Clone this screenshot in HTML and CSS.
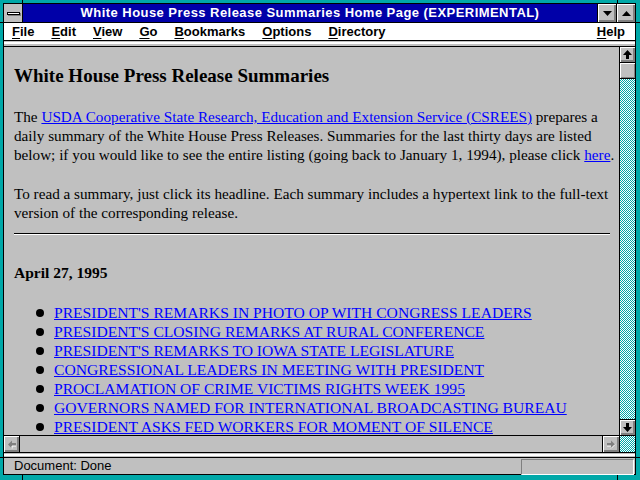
FILE: index.html
```html
<!DOCTYPE html>
<html>
<head>
<meta charset="utf-8">
<title>White House Press Release Summaries Home Page (EXPERIMENTAL)</title>
<link rel="stylesheet" href="styles.css">
</head>
<body>
<div class="screen">
  <span class="mark mark-t1"></span><span class="mark mark-t2"></span>
  <span class="mark mark-b1"></span><span class="mark mark-b2"></span>
  <span class="mark mark-l1"></span><span class="mark mark-l2"></span>
  <span class="mark mark-r1"></span><span class="mark mark-r2"></span>
  <div class="frame">
    <div class="titlebar">
      <div class="sysbtn"><span class="sysbar"></span></div>
      <div class="title">White House Press Release Summaries Home Page (EXPERIMENTAL)</div>
      <div class="tbtn"><svg width="9" height="5" viewBox="0 0 9 5"><path d="M0 0h9L4.5 5z" fill="#000"/></svg></div>
      <div class="tbtn"><svg width="9" height="5" viewBox="0 0 9 5"><path d="M0 5h9L4.5 0z" fill="#000"/></svg></div>
    </div>
    <div class="menubar">
      <span class="mi"><u>F</u>ile</span>
      <span class="mi"><u>E</u>dit</span>
      <span class="mi"><u>V</u>iew</span>
      <span class="mi"><u>G</u>o</span>
      <span class="mi"><u>B</u>ookmarks</span>
      <span class="mi"><u>O</u>ptions</span>
      <span class="mi"><u>D</u>irectory</span>
      <span class="mi mi-help"><u>H</u>elp</span>
    </div>
    <div class="strip"></div>
    <div class="main">
      <div class="viewport">
        <div class="content">
          <h1 class="heading">White House Press Release Summaries</h1>
          <p class="para">The <a href="#">USDA Cooperative State Research, Education and Extension Service (CSREES)</a> prepares a daily summary of the White House Press Releases. Summaries for the last thirty days are listed below; if you would like to see the entire listing (going back to January 1, 1994), please click <a href="#">here</a>.</p>
          <p class="para">To read a summary, just click its headline. Each summary includes a hypertext link to the full-text version of the corresponding release.</p>
          <hr class="rule">
          <h3 class="date">April 27, 1995</h3>
          <ul class="items">
            <li><a href="#">PRESIDENT'S REMARKS IN PHOTO OP WITH CONGRESS LEADERS</a></li>
            <li><a href="#">PRESIDENT'S CLOSING REMARKS AT RURAL CONFERENCE</a></li>
            <li><a href="#">PRESIDENT'S REMARKS TO IOWA STATE LEGISLATURE</a></li>
            <li><a href="#">CONGRESSIONAL LEADERS IN MEETING WITH PRESIDENT</a></li>
            <li><a href="#">PROCLAMATION OF CRIME VICTIMS RIGHTS WEEK 1995</a></li>
            <li><a href="#">GOVERNORS NAMED FOR INTERNATIONAL BROADCASTING BUREAU</a></li>
            <li><a href="#">PRESIDENT ASKS FED WORKERS FOR MOMENT OF SILENCE</a></li>
          </ul>
        </div>
        <div class="vscroll">
          <div class="sbtn"><svg width="9" height="9" viewBox="0 0 9 9"><path d="M4.5 0L9 5H6v4H3V5H0z" fill="#000"/></svg></div>
          <div class="thumb"></div>
          <div class="track"></div>
          <div class="sbtn"><svg width="9" height="9" viewBox="0 0 9 9"><path d="M3 0h3v4h3L4.5 9 0 4h3z" fill="#000"/></svg></div>
        </div>
      </div>
      <div class="hscroll">
        <div class="sbtn sbtn-h sbtn-left"><svg width="10" height="9" viewBox="0 0 10 9"><path d="M1 4.5L5 0.5V3h4v3H5v2.5z" fill="#808080"/><path d="M5 8.5V6h4" fill="none" stroke="#fff" stroke-width="1"/></svg></div>
        <div class="htrack"></div>
        <div class="sbtn sbtn-h sbtn-right"><svg width="10" height="9" viewBox="0 0 10 9"><path d="M9 4.5L5 0.5V3H1v3h4v2.5z" fill="#808080"/><path d="M5 8.5L9 4.5M1 6h4" fill="none" stroke="#fff" stroke-width="1"/></svg></div>
        <div class="corner"></div>
      </div>
    </div>
    <div class="strip strip-low"></div>
    <div class="status">
      <span class="status-text">Document: Done</span>
      <span class="status-box"></span>
    </div>
  </div>
</div>
</body>
</html>
```

FILE: styles.css
```css
* { box-sizing: border-box; }
html, body { margin: 0; padding: 0; }
body { width: 640px; height: 480px; overflow: hidden; background: #00a8a8; }

.screen {
  position: relative;
  width: 640px;
  height: 480px;
  padding: 3px 4px 5px 3px;
  background: #00a8a8;
}
.mark { position: absolute; background: #000; }
.mark-t1 { left: 22px; top: 0; width: 1px; height: 3px; }
.mark-t2 { left: 617px; top: 0; width: 1px; height: 3px; }
.mark-b1 { left: 22px; bottom: 0; width: 1px; height: 5px; }
.mark-b2 { left: 617px; bottom: 0; width: 1px; height: 5px; }
.mark-l1 { left: 0; top: 22px; width: 3px; height: 1px; }
.mark-l2 { left: 0; top: 457px; width: 3px; height: 1px; }
.mark-r1 { right: 0; top: 22px; width: 4px; height: 1px; }
.mark-r2 { right: 0; top: 457px; width: 4px; height: 1px; }

.frame {
  height: 100%;
  border: 1px solid #000;
  display: flex;
  flex-direction: column;
  background: #c0c0c0;
}

/* title bar */
.titlebar {
  flex: none;
  height: 19px;
  display: flex;
  border-bottom: 1px solid #000;
}
.sysbtn {
  width: 19px;
  background: #c0c0c0;
  border-right: 1px solid #000;
  display: flex;
  align-items: center;
  justify-content: center;
}
.sysbar {
  display: block;
  width: 13px;
  height: 3px;
  background: #fff;
  border: 1px solid #000;
  box-shadow: 1px 1px 0 #808080;
}
.title {
  flex: 1;
  background: #0000a8;
  color: #fff;
  font: bold 13px/18px "Liberation Sans", Arial, sans-serif;
  text-align: center;
  white-space: nowrap;
  letter-spacing: 0.45px;
}
.tbtn {
  width: 19px;
  border-left: 1px solid #000;
  background: #c0c0c0;
  box-shadow: inset 1px 1px 0 #fff, inset -1px -1px 0 #808080, inset -2px -2px 0 #808080;
  display: flex;
  align-items: center;
  justify-content: center;
}

/* menu bar */
.menubar {
  flex: none;
  height: 18px;
  background: #fff;
  border-bottom: 1px solid #000;
  display: flex;
  align-items: center;
  padding-left: 4px;
  font: bold 13px/16px "Liberation Sans", Arial, sans-serif;
  color: #000;
}
.mi { padding: 0 8px 0 4px; margin-right: 5px; }
.mi u { text-decoration-thickness: 1px; text-underline-offset: 2px; }
.mi-help { margin-left: auto; margin-right: 2px; }

.strip {
  flex: none;
  height: 6px;
  border-bottom: 1px solid #000;
  background: linear-gradient(#c0c0c0 0 1px, #fff 1px 3px, #c0c0c0 3px);
}
.strip-low { height: 5px; }

/* main */
.main {
  flex: 1;
  min-height: 0;
  display: flex;
  flex-direction: column;
}
.viewport {
  flex: 1;
  min-height: 0;
  display: flex;
}
.content {
  flex: 1;
  overflow: hidden;
  padding: 16px 0 0 10px;
  font: 15.2px/19px "Liberation Serif", "Times New Roman", serif;
  color: #000;
}
.content a { color: #0000ff; text-decoration: underline; }
.heading {
  margin: 0 0 19px;
  font: bold 19px/25px "Liberation Serif", "Times New Roman", serif;
}
.para { margin: 0 0 20px; }
.para:last-of-type { margin-bottom: 0; }
.rule {
  margin: 11px 9px 0 0;
  border: 0;
  height: 2px;
  background: linear-gradient(#000 0 1px, #fff 1px);
}
.date {
  margin: 28px 0 0;
  font: bold 15.5px/19px "Liberation Serif", "Times New Roman", serif;
}
.items {
  list-style: none;
  margin: 21px 0 0;
  padding: 0 0 0 40px;
  font-size: 15.6px;
}
.items li { white-space: nowrap; }
.items li::before {
  content: "";
  display: inline-block;
  width: 8px;
  height: 8px;
  border-radius: 50%;
  background: #000;
  margin-left: -18px;
  margin-right: 10px;
  vertical-align: 1px;
}

/* scrollbars */
.vscroll {
  flex: none;
  width: 16px;
  border-left: 1px solid #000;
  display: flex;
  flex-direction: column;
}
.sbtn {
  flex: none;
  height: 16px;
  background: #c0c0c0;
  box-shadow: inset 1px 1px 0 #fff, inset -1px -1px 0 #808080, inset -2px -2px 0 #808080;
  display: flex;
  align-items: center;
  justify-content: center;
  border-bottom: 1px solid #000;
}
.vscroll .sbtn:last-child { border-bottom: 0; border-top: 1px solid #000; }
.thumb {
  flex: none;
  height: 16px;
  background: #c0c0c0;
  border-bottom: 1px solid #000;
  box-shadow: inset 1px 1px 0 #fff, inset -1px -1px 0 #808080;
}
.track, .corner {
  background: repeating-conic-gradient(#00a8a8 0 25%, #ffffff 0 50%) 0 0 / 2px 2px;
}
.track { flex: 1; }

.hscroll {
  flex: none;
  height: 18px;
  border-top: 1px solid #000;
  border-bottom: 1px solid #000;
  display: flex;
}
.sbtn-h { width: 16px; height: 16px; border-bottom: 0; }
.sbtn-left { border-right: 1px solid #000; }
.sbtn-right { border-left: 1px solid #000; width: 17px; }
.htrack { flex: 1; background: #c0c0c0; }
.corner { width: 16px; border-left: 1px solid #000; }

/* status bar */
.status {
  flex: none;
  height: 16px;
  display: flex;
  align-items: center;
  padding-left: 10px;
  font: 13px/16px "Liberation Sans", Arial, sans-serif;
  color: #000;
}
.status-box {
  margin-left: auto;
  margin-right: 1px;
  width: 113px;
  height: 16px;
  border-top: 1px solid #808080;
  border-left: 1px solid #808080;
  border-bottom: 1px solid #fff;
  border-right: 1px solid #fff;
  margin-top: 2px;
}
```
